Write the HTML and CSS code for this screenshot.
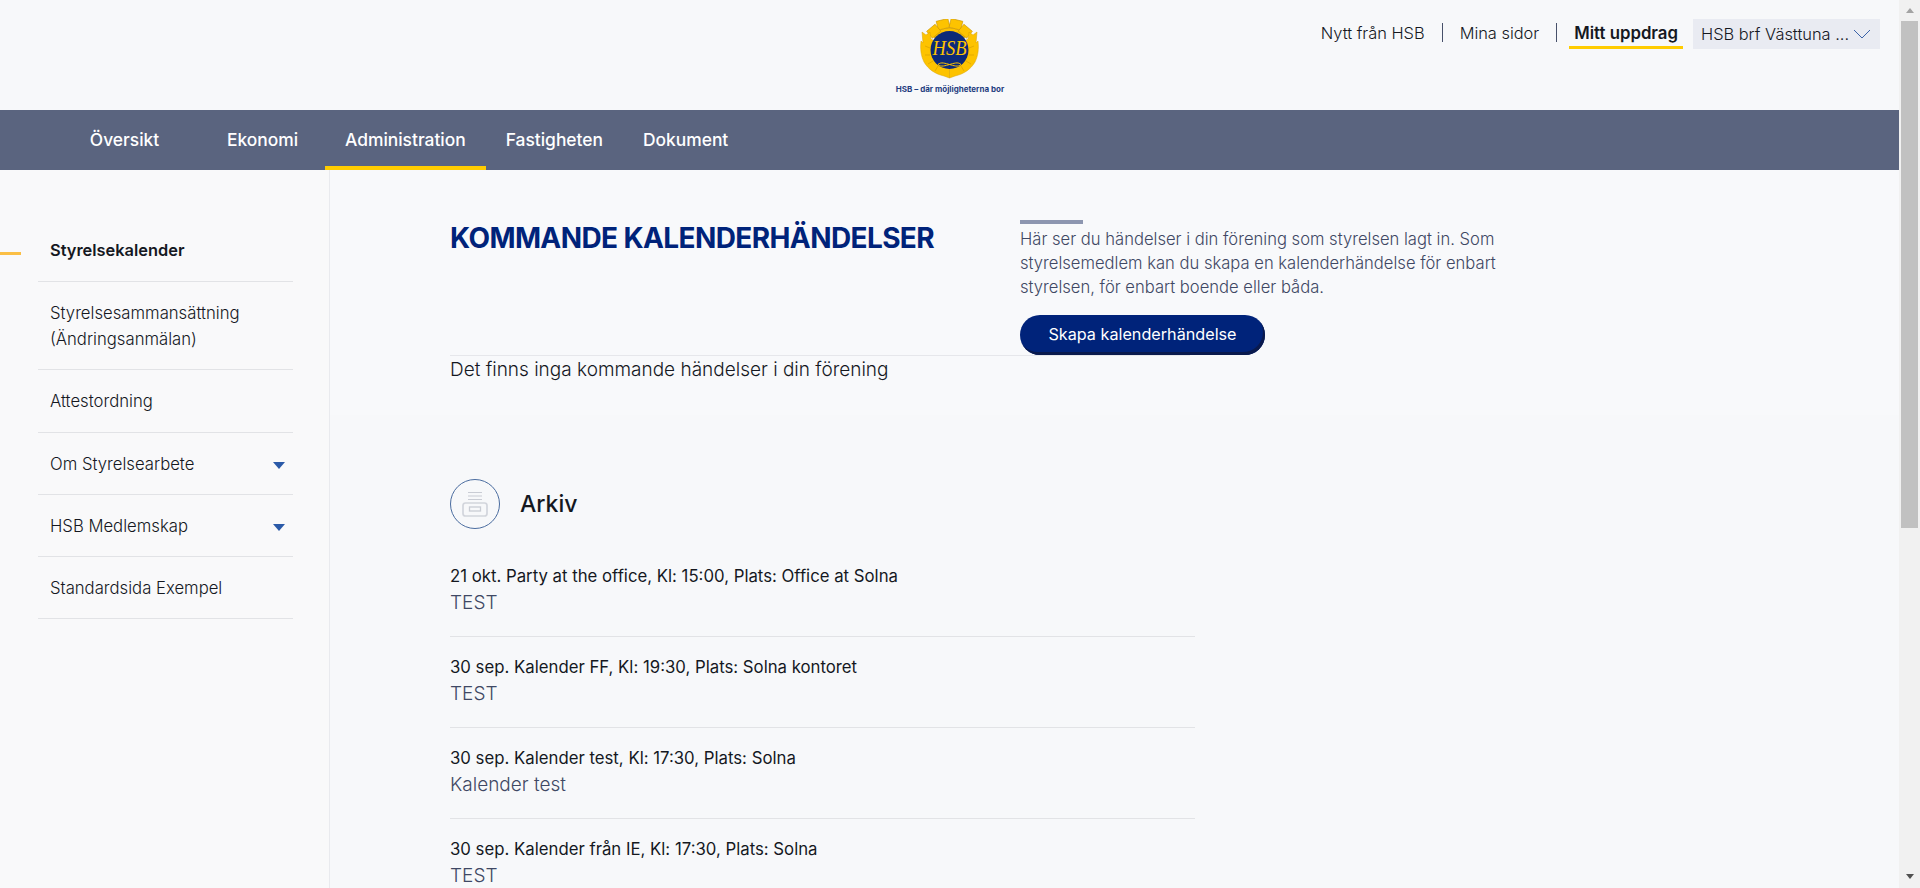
FILE: index.html
```html
<!DOCTYPE html>
<html lang="sv">
<head>
<meta charset="utf-8">
<title>Styrelsekalender</title>
<link rel="stylesheet" href="styles.css">
</head>
<body>
<div class="window">
  <div class="page">
    <header class="header">
      <a class="logo" href="#">
        <svg class="emblem" viewBox="0 0 60 60" width="60" height="60" aria-hidden="true">
          <g fill="#fdc300" stroke="#c99400" stroke-width=".6">
            <path d="M13 17C18 11 23 9 29.500 9S41 11 46 17L41 22H18z"/>
            <rect x="23.500" y="0" width="12" height="9" transform="rotate(-14 29.500 31)"/>
            <rect x="23.500" y="0" width="12" height="9" transform="rotate(14 29.500 31)"/>
            <rect x="24" y="2" width="11" height="9" transform="rotate(-40 29.500 31)"/>
            <rect x="24" y="2" width="11" height="9" transform="rotate(40 29.500 31)"/>
          </g>
          <g fill="#fdc300" stroke="#d9a200" stroke-width=".5">
            <path d="M10 13L11 20L29.500 31V59L24 57C15 55 8 50 4 43C1 37 0 30 1 22L3 24L2 13L6 16Z"/>
            <path d="M10 13L11 20L29.500 31V59L24 57C15 55 8 50 4 43C1 37 0 30 1 22L3 24L2 13L6 16Z" transform="matrix(-1 0 0 1 59 0)"/>
          </g>
          <path d="M5 27L10 29M5 36L10 36M8 45L13 42M15 52L18 47M54 27L49 29M54 36L49 36M51 45L46 42M44 52L41 47" stroke="#d9a200" stroke-width=".7"/>
          <circle cx="29.500" cy="31" r="19" fill="#0c2a78"/>
          <text class="emblem-text" x="29.500" y="36" textLength="34" lengthAdjust="spacingAndGlyphs">HSB</text>
          <path d="M18 45.500c3-3 7.500-1 11.500 0 4-1 8.500-3 11.500 0-3 3-7.500 1-11.500 0-4 1-8.500 3-11.500 0z" fill="none" stroke="#fdc300" stroke-width="1"/>
        </svg>
        <span class="tagline">HSB – där möjligheterna bor</span>
      </a>
      <nav class="top-links">
        <a class="top-link" href="#">Nytt från HSB</a>
        <span class="top-sep"></span>
        <a class="top-link" href="#">Mina sidor</a>
        <span class="top-sep"></span>
        <a class="top-link active" href="#">Mitt uppdrag</a>
        <button class="org-select" type="button">
          <span>HSB brf Västtuna ...</span>
          <svg viewBox="0 0 18 10" width="18" height="10" aria-hidden="true"><path d="M1 1l8 8 8-8" fill="none" stroke="#3a62a8" stroke-width="1"/></svg>
        </button>
      </nav>
    </header>

    <nav class="main-nav">
      <a class="nav-item fixed first" href="#">Översikt</a>
      <a class="nav-item fixed" href="#">Ekonomi</a>
      <a class="nav-item active" href="#">Administration</a>
      <a class="nav-item" href="#">Fastigheten</a>
      <a class="nav-item" href="#">Dokument</a>
    </nav>

    <div class="body-row">
      <aside class="sidebar">
        <ul class="side-list">
          <li class="side-item current"><span class="side-mark"></span>Styrelsekalender</li>
          <li class="side-item">Styrelsesammansättning<br>(Ändringsanmälan)</li>
          <li class="side-item tall">Attestordning</li>
          <li class="side-item">Om Styrelsearbete<span class="caret"></span></li>
          <li class="side-item">HSB Medlemskap<span class="caret"></span></li>
          <li class="side-item">Standardsida Exempel</li>
        </ul>
      </aside>

      <main class="main">
        <section class="upcoming">
          <div class="upcoming-head">
            <h1 class="title">KOMMANDE KALENDERHÄNDELSER</h1>
            <div class="intro">
              <div class="intro-bar"></div>
              <p class="intro-text">Här ser du händelser i din förening som styrelsen lagt in. Som styrelsemedlem kan du skapa en kalenderhändelse för enbart styrelsen, för enbart boende eller båda.</p>
              <a class="btn" href="#">Skapa kalenderhändelse</a>
            </div>
          </div>
          <p class="empty">Det finns inga kommande händelser i din förening</p>
        </section>

        <section class="archive">
          <div class="archive-head">
            <span class="archive-icon">
              <svg viewBox="0 0 50 50" width="50" height="50" aria-hidden="true">
                <circle cx="25" cy="25" r="24.500" fill="none" stroke="#4a6c9f" stroke-width="1"/>
                <path d="M18 13.500h14M18 17h14M18 20.500h14" stroke="#c9ccd4" stroke-width="1.200"/>
                <rect x="13" y="24" width="24" height="13" rx="2.500" fill="none" stroke="#d2d5dc" stroke-width="1.700"/>
                <rect x="19.500" y="28" width="11" height="4" fill="none" stroke="#c9ccd4" stroke-width="1.300"/>
              </svg>
            </span>
            <h2 class="archive-title">Arkiv</h2>
          </div>
          <div class="event">
            <div class="event-title">21 okt. Party at the office, Kl: 15:00, Plats: Office at Solna</div>
            <div class="event-desc">TEST</div>
          </div>
          <div class="event">
            <div class="event-title">30 sep. Kalender FF, Kl: 19:30, Plats: Solna kontoret</div>
            <div class="event-desc">TEST</div>
          </div>
          <div class="event">
            <div class="event-title">30 sep. Kalender test, Kl: 17:30, Plats: Solna</div>
            <div class="event-desc">Kalender test</div>
          </div>
          <div class="event">
            <div class="event-title">30 sep. Kalender från IE, Kl: 17:30, Plats: Solna</div>
            <div class="event-desc">TEST</div>
          </div>
        </section>
      </main>
    </div>
  </div>
  <div class="scrollbar">
    <span class="scroll-up"></span>
    <span class="scroll-thumb"></span>
    <span class="scroll-down"></span>
  </div>
</div>
</body>
</html>
```
FILE: styles.css
```css
* { box-sizing: border-box; }
html, body { margin: 0; padding: 0; height: 100%; overflow: hidden; }
body { font-family: Inter, "Liberation Sans", sans-serif; color: #15181f; background: #f7f8fa; }
a { color: inherit; text-decoration: none; }
h1, h2, p, ul { margin: 0; padding: 0; }
ul { list-style: none; }

.window { display: flex; height: 888px; overflow: hidden; }
.page { flex: 1; min-width: 0; display: flex; flex-direction: column; }

.scrollbar { width: 21px; flex: none; background: #f1f1f1; padding: 0 2px; display: flex; flex-direction: column; }
.scroll-up { height: 21px; flex: none; display: flex; align-items: center; justify-content: center; }
.scroll-up::before { content: ""; border: 4.500px solid transparent; border-top: 0; border-bottom: 5px solid #a3a3a3; }
.scroll-thumb { height: 507px; flex: none; background: #c1c1c1; }
.scroll-down { flex: 1; display: flex; align-items: flex-end; justify-content: center; padding-bottom: 9px; }
.scroll-down::before { content: ""; border: 4.500px solid transparent; border-bottom: 0; border-top: 5px solid #505050; }

.header { position: relative; height: 110px; flex: none; background: #f7f8fa; }
.logo { position: absolute; left: 895px; top: 19px; width: 110px; display: flex; flex-direction: column; align-items: center; }
.emblem { display: block; }
.emblem-text { font-family: "Liberation Serif", serif; font-style: italic; font-size: 22px; fill: #fdc300; text-anchor: middle; }
.tagline { font-size: 8px; line-height: 12px; margin-top: 4px; font-weight: 700; color: #1f3d7f; white-space: nowrap; }

.top-links { position: absolute; right: 19px; top: 19px; display: flex; align-items: flex-start; height: 30px; font-size: 16.400px; font-weight: 300; }
.top-link { display: block; height: 30px; line-height: 28px; }
.top-link.active { font-size: 16.800px; font-weight: 600; padding: 0 5px; border-bottom: 3px solid #ffcc00; margin-left: -5px; margin-right: 10px; }
.top-sep { width: 1px; height: 19px; margin: 4px 17px 0; background: #47506a; }
.org-select { display: flex; align-items: center; justify-content: space-between; width: 187px; height: 30px; padding: 0 9px 0 8px; border: 0; background: #e9ebf2; color: #15181f; font: 300 16.400px/28px Inter, sans-serif; white-space: nowrap; }

.main-nav { height: 60px; flex: none; display: flex; padding-left: 62px; background: #5a647f; color: #fff; font-size: 17.400px; font-weight: 500; }
.nav-item { padding: 0 20px; line-height: 60px; border-bottom: 4px solid transparent; text-align: center; white-space: nowrap; }
.nav-item.fixed { width: 125px; padding: 0; }
.nav-item.first { margin-right: 13px; }
.nav-item.active { border-bottom-color: #ffcc00; }

.body-row { flex: 1; min-height: 0; display: flex; }
.sidebar { width: 330px; flex: none; padding: 50px 36px 0 38px; background: #f9f9fa; border-right: 1px solid #e9eaee; }
.side-item { position: relative; padding: 18px 12px 17px; line-height: 26px; font-size: 16.700px; font-weight: 300; border-bottom: 1px solid #e2e3e6; }
.side-item.tall { padding-bottom: 18px; }
.side-item.current { font-size: 16.400px; font-weight: 600; padding: 17px 12px 18px; }
.side-mark { position: absolute; left: -38px; top: 32px; width: 21px; height: 3px; background: #fbbf45; }
.caret { position: absolute; right: 8px; top: 29px; border: 6.500px solid transparent; border-bottom: 0; border-top: 7px solid #2b5aa8; }

.main { flex: 1; min-width: 0; }
.upcoming { height: 245px; padding: 50px 0 0 120px; background: #f8f9fb; }
.upcoming-head { display: flex; height: 136px; width: 740px; border-bottom: 1px solid #e6e7eb; }
.title { width: 570px; flex: none; font-size: 28px; letter-spacing: -.6px; line-height: 36px; font-weight: 700; color: #00237a; white-space: nowrap; }
.intro { width: 480px; flex: none; }
.intro-bar { width: 63px; height: 4px; background: #8d96b0; }
.intro-text { margin-top: 3px; font-size: 16.600px; line-height: 24px; font-weight: 300; color: #3f4864; }
.btn { display: block; width: 245px; height: 40px; margin-top: 16px; border-radius: 20px; background: #00237a; box-shadow: inset -2px -3px 0 #0a1a4d; color: #fff; font-size: 16.200px; line-height: 38px; text-align: center; }
.empty { font-size: 19px; line-height: 28px; font-weight: 300; }

.archive { width: 865px; padding: 64px 0 0 120px; }
.archive-head { display: flex; align-items: center; gap: 20px; margin-bottom: 34px; }
.archive-icon { display: block; width: 50px; height: 50px; }
.archive-icon svg { display: block; }
.archive-title { font-size: 23px; font-weight: 500; line-height: 50px; }
.event { height: 74px; margin-bottom: 17px; border-bottom: 1px solid #e2e3e6; }
.event-title { font-size: 16.750px; line-height: 26px; font-weight: 400; }
.event-desc { margin-top: 1px; font-size: 19px; line-height: 26px; font-weight: 300; color: #3f4864; }
```
